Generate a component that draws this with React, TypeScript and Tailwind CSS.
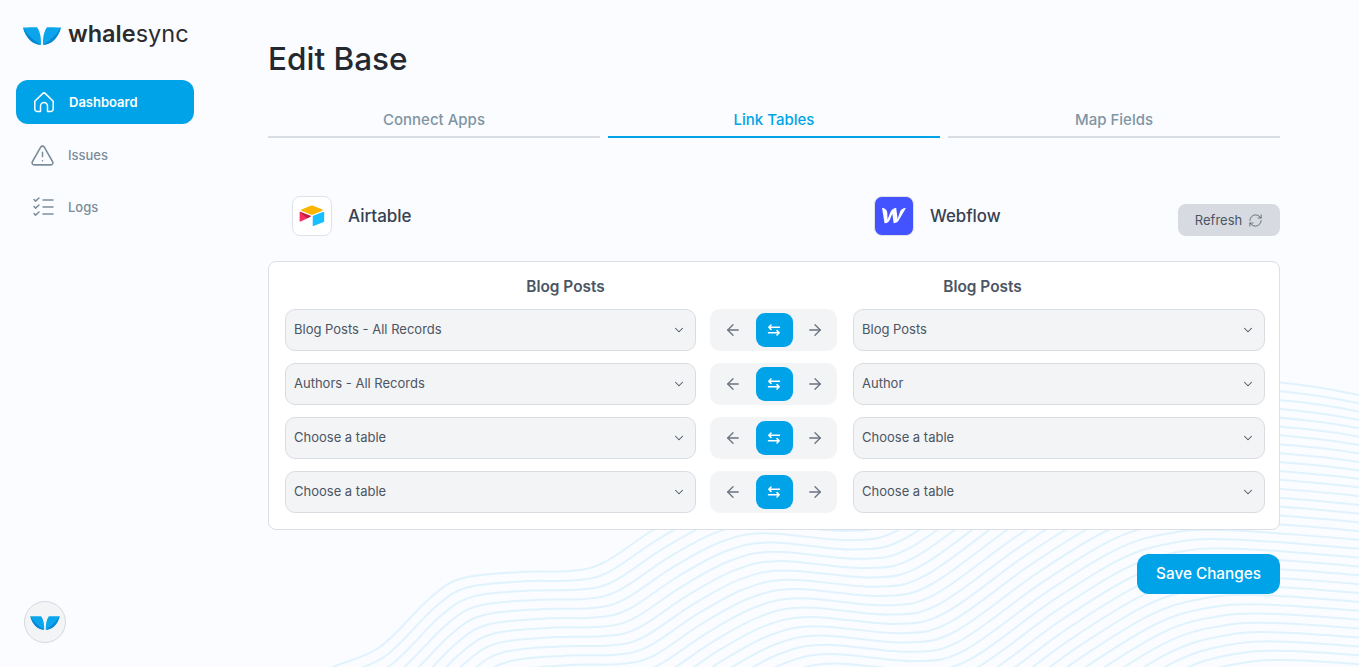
import React from "react";
import { ArrowLeft, ArrowRight, ChevronDown, RefreshCw, TriangleAlert } from "lucide-react";

const FONT = "[font-family:Inter,'Liberation_Sans',sans-serif]";

const CONTROL: [number, number][] = [
  [250, 720], [300, 684], [333, 667], [380, 647], [430, 598], [463, 578], [520, 572], [570, 571], [603, 563],
  [653, 530], [700, 505], [745, 496], [830, 503], [880, 492], [960, 435], [1030, 392], [1080, 376], [1140, 372], [1285, 383], [1359, 395], [1420, 408],
];

function wavePath(k: number) {
  const pts = CONTROL.map(([x, y]) => [x + k * 5, y + k * 9.3]);
  pts.unshift([pts[0][0] - 200 - k * 5, pts[0][1] + 100]);
  let d = `M${pts[0][0]} ${pts[0][1]}`;
  for (let i = 0; i < pts.length - 1; i++) {
    const p0 = pts[Math.max(0, i - 1)];
    const p1 = pts[i];
    const p2 = pts[i + 1];
    const p3 = pts[Math.min(pts.length - 1, i + 2)];
    const c1x = p1[0] + (p2[0] - p0[0]) / 6;
    const c1y = p1[1] + (p2[1] - p0[1]) / 6;
    const c2x = p2[0] - (p3[0] - p1[0]) / 6;
    const c2y = p2[1] - (p3[1] - p1[1]) / 6;
    d += `C${c1x.toFixed(1)} ${c1y.toFixed(1)} ${c2x.toFixed(1)} ${c2y.toFixed(1)} ${p2[0].toFixed(1)} ${p2[1].toFixed(1)}`;
  }
  return d;
}

function Waves() {
  const lines = Array.from({ length: 34 }, (_, k) => k);
  return (
    <svg className="absolute inset-0 w-full h-full pointer-events-none" viewBox="0 0 1359 667" preserveAspectRatio="none" fill="none">
      {lines.map((k) => (
        <path key={k} d={wavePath(k)} stroke="#e0f3fd" strokeWidth="2" />
      ))}
    </svg>
  );
}

function Leaves({ className }: { className: string }) {
  return (
    <svg className={className} viewBox="0 0 38 18" fill="none">
      <path d="M0 .4C5 .4 10 .2 14 .2C17.2 4.5 18.2 11 18 17.8C10 17.4 3 11.5 0 .4Z" fill="#0aa5ea" />
      <path d="M0 .4C4 7 9 12 18 17.8C10 17.4 3 11.5 0 .4Z" fill="#0486d2" />
      <path d="M38 .4C33 .4 28 .2 24 .2C20.8 4.5 19.8 11 20 17.8C28 17.4 35 11.5 38 .4Z" fill="#0aa5ea" />
      <path d="M38 .4C34 7 29 12 20 17.8C28 17.4 35 11.5 38 .4Z" fill="#0486d2" />
    </svg>
  );
}

function HomeIcon() {
  return (
    <svg className="w-[24px] h-[24px] text-white" viewBox="0 0 24 24" fill="none" stroke="currentColor" strokeWidth="1.5" strokeLinejoin="round" strokeLinecap="round">
      <path d="M2.8 11.2 10.6 3.6a2 2 0 0 1 2.8 0l7.8 7.6V19a2.5 2.5 0 0 1-2.5 2.5H15.5V16a3.5 3.5 0 0 0-7 0v5.5H5.3A2.5 2.5 0 0 1 2.8 19Z" />
    </svg>
  );
}

function LogsIcon() {
  return (
    <svg className="w-[24px] h-[24px] text-[#7b8d9b]" viewBox="0 0 24 24" fill="none" stroke="currentColor" strokeWidth="1.5" strokeLinecap="round" strokeLinejoin="round">
      <path d="M12 5h10M12 12h10M12 19h10" />
      <path d="m3 4.5 1.6 1.6L8 3M3 11.5l1.6 1.6L8 10M3 18.5l1.6 1.6L8 17" />
    </svg>
  );
}

function SwapIcon() {
  return (
    <svg className="w-[14px] h-[12px] text-white" viewBox="0 0 14 12" fill="none" stroke="currentColor" strokeWidth="1.5" strokeLinecap="round" strokeLinejoin="round">
      <path d="M12.5 3.2H1.8M4 1 1.8 3.2 4 5.4" />
      <path d="M1.5 8.8h10.7M10 6.6l2.2 2.2L10 11" />
    </svg>
  );
}

function AirtableLogo() {
  return (
    <svg className="w-[28px] h-[24px]" viewBox="0 0 200 170">
      <path fill="#FCB400" d="M90.04 12.37 24.63 39.42c-3.64 1.5-3.6 6.68.06 8.13l65.68 26.05a24.37 24.37 0 0 0 17.97 0l65.68-26.05c3.66-1.45 3.7-6.62.06-8.13l-65.41-27.05a24.37 24.37 0 0 0-18.63 0" />
      <path fill="#18BFFF" d="M105.17 87.85v65.07c0 3.09 3.12 5.21 5.99 4.07l73.19-28.41a4.37 4.37 0 0 0 2.76-4.07V59.44c0-3.09-3.12-5.21-5.99-4.07l-73.19 28.41a4.37 4.37 0 0 0-2.76 4.07" />
      <path fill="#F82B60" d="M88.08 91.21 66.36 101.7l-2.2 1.07-45.85 21.97c-2.91 1.4-6.62-.72-6.62-3.95V59.72c0-1.17.6-2.18 1.4-2.94.33-.33.71-.61 1.1-.83 1.09-.65 2.65-.83 3.97-.3l69.53 27.55c3.53 1.4 3.81 6.35.39 8.01" />
      <path fill="#BA1E45" d="m88.08 91.21-21.72 10.49-53.27-44.92c.33-.33.71-.61 1.1-.83 1.09-.65 2.65-.83 3.97-.3l69.53 27.55c3.53 1.4 3.81 6.35.39 8.01" />
    </svg>
  );
}

function WebflowLogo() {
  return (
    <svg className="w-[24px] h-[24px]" viewBox="0 0 24 24">
      <path fill="#fff" d="M17.8 8.56s-1.95 6.1-2.09 6.6c-.05-.5-1.48-11.16-1.48-11.16-3.32 0-5.09 2.36-6.02 4.86 0 0-2.37 6.14-2.57 6.66-.01-.49-.36-6.6-.36-6.6C5.08 5.86 2.63 4 .05 4l2.5 15.2c3.17 0 4.88-2.16 5.78-4.55 0 0 1.9-4.95 1.98-5.17.02.2 1.37 9.72 1.37 9.72 3.18 0 4.89-2.01 5.81-4.2L23.95 4c-3.15 0-5.6 1.6-6.15 4.56Z" />
    </svg>
  );
}

function NavItem({ icon, label }: { icon: React.ReactNode; label: string }) {
  return (
    <div className="flex items-center h-11 pl-[15px] gap-[13px] text-[13px] font-medium text-[#7b8d9b]">
      {icon}
      <span className="mt-px">{label}</span>
    </div>
  );
}

function Select({ value, className }: { value: string; className: string }) {
  return (
    <div className={`${className} min-w-0 h-[42px] flex items-center justify-between pl-2 pr-[9px] bg-[#f3f4f6] border border-[#d9dce1] rounded-[10px] text-[13px] text-[#4b5563]`}>
      <span>{value}</span>
      <ChevronDown className="w-[14px] h-[14px] text-[#4b5563]" strokeWidth={1.75} />
    </div>
  );
}

function Row({ left, right }: { left: string; right: string }) {
  return (
    <div className="flex items-center">
      <Select value={left} className="w-[411px] shrink-0" />
      <div className="w-[127px] h-[42px] ml-[14px] mr-4 flex items-center justify-between pl-[14px] pr-[13px] bg-[#f3f4f6] rounded-[10px] shrink-0">
        <ArrowLeft className="w-[18px] h-[18px] text-[#6b7280]" strokeWidth={1.75} />
        <div className="w-[37px] h-[34px] flex items-center justify-center bg-[#00a3e8] rounded-[9px]">
          <SwapIcon />
        </div>
        <ArrowRight className="w-[18px] h-[18px] text-[#6b7280]" strokeWidth={1.75} />
      </div>
      <Select value={right} className="flex-1" />
    </div>
  );
}

function Tab({ label, active }: { label: string; active?: boolean }) {
  return (
    <div className={`flex-1 h-[30px] pt-px flex items-start justify-center border-b-2 text-[15px] font-medium leading-[22px] ${active ? "border-[#00a3e8] text-[#00a3e8]" : "border-[#d8dde3] text-[#7f95a3]"}`}>
      {label}
    </div>
  );
}

export default function App() {
  return (
    <div className={`relative flex h-screen overflow-hidden bg-[#fbfcff] ${FONT}`}>
      <Waves />
      <aside className="relative w-[210px] shrink-0 flex flex-col justify-between px-4 pt-[20px] pb-6">
        <div>
          <div className="flex items-center h-[28px] pl-[7px] gap-[7px]">
            <Leaves className="w-[38px] h-[18px] mt-[3px]" />
            <span className="text-[23.5px] leading-[28px] text-[#2b2b2e] font-semibold">
              whale<span className="font-normal">sync</span>
            </span>
          </div>
          <nav className="mt-[32px] flex flex-col gap-2">
            <div className="flex items-center h-11 pl-[16px] gap-[13px] bg-[#00a3e8] rounded-xl text-[13px] font-semibold text-white">
              <HomeIcon />
              <span className="mt-px">Dashboard</span>
            </div>
            <div className="mt-px">
              <NavItem icon={<TriangleAlert className="w-[25px] h-[25px] -ml-px" strokeWidth={1.5} />} label="Issues" />
            </div>
            <NavItem icon={<LogsIcon />} label="Logs" />
          </nav>
        </div>
        <div className="w-[42px] h-[42px] ml-2 flex items-center justify-center bg-[#f3f4f6] border border-[#d5d9df] rounded-full">
          <Leaves className="w-[30px] h-[14px] mt-px" />
        </div>
      </aside>
      <main className="relative flex-1 min-w-0 pl-[58px] pr-[79px] pt-[39px]">
        <h1 className="text-[31.5px] leading-[40px] font-medium text-[#24292f]">Edit Base</h1>
        <div className="mt-[29px] flex gap-2">
          <Tab label="Connect Apps" />
          <Tab label="Link Tables" active />
          <Tab label="Map Fields" />
        </div>
        <div className="mt-[58px] h-[40px] flex">
          <div className="w-[606px] pl-[24px] flex items-center gap-4">
            <div className="w-10 h-10 flex items-center justify-center bg-white border border-[#dfe2e7] rounded-lg">
              <AirtableLogo />
            </div>
            <span className="text-[17px] font-medium text-[#374151] mt-px">Airtable</span>
          </div>
          <div className="flex-1 flex items-center gap-4">
            <div className="w-10 h-10 flex items-center justify-center bg-[#4353ff] border border-[#dfe2e7] rounded-lg">
              <WebflowLogo />
            </div>
            <span className="text-[16.8px] font-medium text-[#374151] mt-px">Webflow</span>
            <div className="ml-auto mt-2 w-[102px] h-8 pt-px flex items-center justify-center gap-[6px] bg-[#d7dbe1] rounded-lg text-[13px] text-[#4b5563]">
              Refresh
              <RefreshCw className="w-[15px] h-[15px]" strokeWidth={1.25} />
            </div>
          </div>
        </div>
        <div className="mt-[25px] bg-white border border-[#dcdfe5] rounded-lg pl-4 pr-[14px] pb-4 pt-[14px]">
          <div className="grid grid-cols-2 pl-[72px] pr-[74px] text-center text-[15.4px] leading-[22px] font-semibold text-[#4b5563]">
            <span>Blog Posts</span>
            <span>Blog Posts</span>
          </div>
          <div className="mt-[11px] flex flex-col gap-3">
            <Row left="Blog Posts - All Records" right="Blog Posts" />
            <Row left="Authors - All Records" right="Author" />
            <Row left="Choose a table" right="Choose a table" />
            <Row left="Choose a table" right="Choose a table" />
          </div>
        </div>
        <div className="mt-6 flex justify-end">
          <div className="w-[143px] h-10 flex items-center justify-center bg-[#00a3e8] rounded-xl text-[15.3px] font-medium text-white">
            Save Changes
          </div>
        </div>
      </main>
    </div>
  );
}
